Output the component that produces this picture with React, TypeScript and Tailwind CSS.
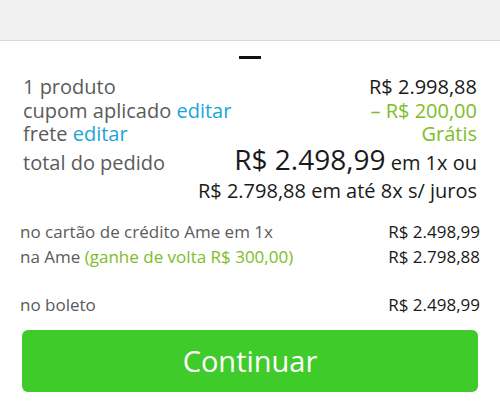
import React from "react";

const font = { fontFamily: "'Open Sans', 'Noto Sans', sans-serif" };

function Row({ left, right, className = "" }: { left: React.ReactNode; right: React.ReactNode; className?: string }) {
  return (
    <div className={`flex items-baseline justify-between ${className}`}>
      <div className="text-[#5b5b5b]">{left}</div>
      <div>{right}</div>
    </div>
  );
}

export default function App() {
  return (
    <div className="h-[415px] w-[500px] overflow-hidden bg-white" style={font}>
      <div className="h-[41px] border-b border-[#d9d9d9] bg-[#f0f0f0]" />

      <div className="flex justify-center pt-[15px]">
        <div className="h-[3px] w-[22px] bg-[#111]" />
      </div>

      {/* ── Order summary ── */}
      <div className="px-[23px] pt-[16px] text-[20px] leading-[23.5px]">
        <Row left="1 produto" right={<span className="text-[#1a1a1a]">R$ 2.998,88</span>} />
        <Row
          left={
            <>
              cupom aplicado <span className="text-[#1ba6d8]">editar</span>
            </>
          }
          right={<span className="text-[#7dbd27]">– R$ 200,00</span>}
        />
        <Row
          left={
            <>
              frete <span className="text-[#1ba6d8]">editar</span>
            </>
          }
          right={<span className="text-[#7dbd27]">Grátis</span>}
        />

        <div className="mt-[2px] flex items-baseline justify-between">
          <div className="text-[#5b5b5b]">total do pedido</div>
          <div className="text-[#1a1a1a]">
            <span className="text-[28px]">R$ 2.498,99</span> em 1x ou
          </div>
        </div>
        <div className="mt-[5px] text-right text-[#1a1a1a]">R$ 2.798,88 em até 8x s/ juros</div>
      </div>

      {/* ── Payment options ── */}
      <div className="pl-[20px] pr-[20px] pt-[16px] text-[17px] leading-[25px]">
        <Row left="no cartão de crédito Ame em 1x" right={<span className="text-[#1a1a1a]">R$ 2.498,99</span>} />
        <Row
          left={
            <>
              na Ame <span className="text-[#7dbd27]">(ganhe de volta R$ 300,00)</span>
            </>
          }
          right={<span className="text-[#1a1a1a]">R$ 2.798,88</span>}
        />
        <Row className="mt-[23px]" left="no boleto" right={<span className="text-[#1a1a1a]">R$ 2.498,99</span>} />
      </div>

      <div className="px-[22px] pt-[13px]">
        <button className="flex h-[62px] w-full items-center justify-center rounded-[6px] bg-[#3fcc2b] text-[29px] text-white">
          Continuar
        </button>
      </div>
    </div>
  );
}
